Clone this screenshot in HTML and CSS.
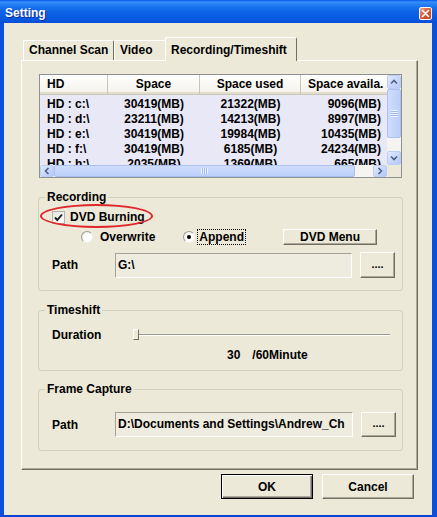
FILE: index.html
```html
<!DOCTYPE html>
<html lang="en">
<head>
<meta charset="utf-8">
<title>Setting</title>
<link rel="stylesheet" href="styles.css">
</head>
<body>
<div class="window">
  <div class="titlebar">
    <span class="title">Setting</span>
    <span class="close" aria-label="Close">
      <svg width="9" height="9" viewBox="0 0 9 9"><path d="M1.5 1.5 L7.5 7.5 M7.5 1.5 L1.5 7.5" stroke="#fff" stroke-width="1.7" stroke-linecap="round"/></svg>
    </span>
  </div>

  <div class="client">
    <div class="tabs">
      <div class="tab tab-scan">Channel Scan</div>
      <div class="tab tab-video">Video</div>
      <div class="tab tab-rec">Recording/Timeshift</div>
    </div>

    <div class="panel">
      <div class="list">
        <div class="viewport">
          <div class="lrow lhead">
            <span class="c1">HD</span>
            <span class="c2">Space</span>
            <span class="c3">Space used</span>
            <span class="c4">Space availa.</span>
          </div>
          <div class="lrow"><span class="c1">HD : c:\</span><span class="c2">30419(MB)</span><span class="c3">21322(MB)</span><span class="c4">9096(MB)</span></div>
          <div class="lrow"><span class="c1">HD : d:\</span><span class="c2">23211(MB)</span><span class="c3">14213(MB)</span><span class="c4">8997(MB)</span></div>
          <div class="lrow"><span class="c1">HD : e:\</span><span class="c2">30419(MB)</span><span class="c3">19984(MB)</span><span class="c4">10435(MB)</span></div>
          <div class="lrow"><span class="c1">HD : f:\</span><span class="c2">30419(MB)</span><span class="c3">6185(MB)</span><span class="c4">24234(MB)</span></div>
          <div class="lrow"><span class="c1">HD : h:\</span><span class="c2">2035(MB)</span><span class="c3">1369(MB)</span><span class="c4">665(MB)</span></div>
        </div>

        <div class="vscroll">
          <span class="sbtn">
            <svg width="8" height="6" viewBox="0 0 8 6"><path d="M1 4.5 L4 1.5 L7 4.5" fill="none" stroke="#4D6185" stroke-width="1.6"/></svg>
          </span>
          <span class="vthumb"><span class="grip-h"></span></span>
          <span class="strack"></span>
          <span class="sbtn">
            <svg width="8" height="6" viewBox="0 0 8 6"><path d="M1 1.5 L4 4.5 L7 1.5" fill="none" stroke="#4D6185" stroke-width="1.6"/></svg>
          </span>
        </div>

        <div class="hscroll">
          <span class="sbtn">
            <svg width="6" height="8" viewBox="0 0 6 8"><path d="M4.5 1 L1.5 4 L4.5 7" fill="none" stroke="#4D6185" stroke-width="1.6"/></svg>
          </span>
          <span class="hthumb"><span class="grip-v"></span></span>
          <span class="strack"></span>
          <span class="sbtn">
            <svg width="6" height="8" viewBox="0 0 6 8"><path d="M1.5 1 L4.5 4 L1.5 7" fill="none" stroke="#4D6185" stroke-width="1.6"/></svg>
          </span>
        </div>
        <div class="corner"></div>
      </div>

      <fieldset class="group group-rec">
        <legend>Recording</legend>
        <div class="gbody">
          <div class="row-check">
            <span class="checkbox">
              <svg width="11" height="11" viewBox="0 0 11 11"><path d="M2 5.5 L4.3 8 L9 2.5" fill="none" stroke="#1c1c1c" stroke-width="1.9"/></svg>
            </span>
            <span class="check-label">DVD Burning</span>
            <span class="mark-ring"></span>
          </div>
          <div class="row-radio">
            <span class="radio r-first"></span>
            <span class="radio-label">Overwrite</span>
            <span class="radio r-second checked"></span>
            <span class="focus">Append</span>
            <button class="btn btn-dvd" type="button">DVD Menu</button>
          </div>
          <div class="row-path">
            <span class="plabel">Path</span>
            <span class="input">G:\</span>
            <button class="btn browse" type="button">....</button>
          </div>
        </div>
      </fieldset>

      <fieldset class="group group-time">
        <legend>Timeshift</legend>
        <div class="gbody">
          <div class="row-dur">
            <span class="dlabel">Duration</span>
            <div class="slider">
              <span class="track"></span>
              <span class="thumb"></span>
            </div>
          </div>
          <div class="row-val">
            <span class="v-num">30</span>
            <span class="v-unit">/60Minute</span>
          </div>
        </div>
      </fieldset>

      <fieldset class="group group-frame">
        <legend>Frame Capture</legend>
        <div class="gbody">
          <div class="row-path">
            <span class="plabel">Path</span>
            <span class="input input-wide">D:\Documents and Settings\Andrew_Ch</span>
            <button class="btn browse" type="button">....</button>
          </div>
        </div>
      </fieldset>
    </div>

    <div class="actions">
      <button class="btn btn-action btn-default" type="button">OK</button>
      <button class="btn btn-action" type="button">Cancel</button>
    </div>
  </div>
</div>
</body>
</html>
```

FILE: styles.css
```css
* {
  box-sizing: border-box;
}

html,
body {
  margin: 0;
  padding: 0;
}

body {
  width: 437px;
  height: 517px;
  overflow: hidden;
  font: bold 12px "Liberation Sans", Arial, sans-serif;
  color: #000;
  background: #ECE9D8;
}

/* ---------- window frame ---------- */
.window {
  display: flex;
  flex-direction: column;
  width: 437px;
  height: 517px;
}

.titlebar {
  flex: 0 0 23px;
  display: flex;
  align-items: center;
  justify-content: space-between;
  padding: 3px 5px 0 5px;
  background: linear-gradient(to bottom,
    #0058EE 0px, #3A8EF8 2px, #2A84F6 4px, #1873EE 7px,
    #0E66E8 11px, #0A5DE4 16px, #0757DF 20px, #0A4CD6 23px);
}

.title {
  color: #fff;
  font-size: 12px;
  text-shadow: 1px 1px 0 #0A2A9A;
}

.close {
  width: 13px;
  height: 13px;
  display: flex;
  align-items: center;
  justify-content: center;
  border: 1px solid #fff;
  border-radius: 2px;
  background: linear-gradient(135deg, #EBA58E 0%, #DC5A35 45%, #C8421C 100%);
}

.client {
  flex: 1;
  display: flex;
  flex-direction: column;
  background: #ECE9D8;
  border-left: 4px solid #0A50DC;
  border-right: 5px solid #0A50DC;
  border-bottom: 2px solid #0845D2;
  padding: 14px 14px 0 17px;
}

/* ---------- tabs ---------- */
.tabs {
  display: flex;
  align-items: flex-end;
  height: 23px;
  padding-left: 2px;
}

.tab {
  height: 20px;
  line-height: 18px;
  padding-left: 5px;
  border-top: 1px solid #fff;
  border-left: 1px solid #fff;
  border-right: 1px solid #716F64;
  border-radius: 2px 2px 0 0;
  background: #ECE9D8;
  white-space: nowrap;
}

.tab-scan {
  width: 91px;
}

.tab-video {
  width: 53px;
}

.tab-rec {
  width: 132px;
  height: 24px;
  margin-left: -2px;
  margin-bottom: -1px;
  padding-top: 3px;
  position: relative;
  z-index: 1;
}

.panel {
  border: 1px solid;
  border-color: #fff #716F64 #716F64 #fff;
  box-shadow: inset -1px -1px 0 #ACA899;
  padding: 13px 14px 18px 16px;
}

/* ---------- drive list ---------- */
.list {
  margin: 0 1px;
  height: 104px;
  border: 1px solid #8E9092;
  display: grid;
  grid-template-columns: 1fr 14px;
  grid-template-rows: 1fr 12px;
  background: #E8E8F6;
}

.viewport {
  overflow: hidden;
  grid-column: 1;
  grid-row: 1;
}

.lrow {
  display: flex;
  height: 15px;
  line-height: 15px;
  white-space: nowrap;
}

.lrow span {
  flex-shrink: 0;
}

.lhead {
  height: 20px;
  line-height: 19px;
  margin-bottom: 2px;
  background: linear-gradient(to bottom, #FFFFFF, #F2F1EA);
  border-bottom: 1px solid #CBC7B8;
  box-shadow: inset 0 -2px 0 #E2DECD;
}

.lhead span {
  border-right: 1px solid #C9C6B6;
}

.lhead .c4 {
  border-right: 0;
}

.c1 {
  width: 68px;
  padding-left: 7px;
}

.c2 {
  width: 92px;
  text-align: center;
}

.c3 {
  width: 101px;
  text-align: center;
}

.c4 {
  width: 100px;
  text-align: right;
  padding-right: 20px;
}

.lhead .c4 {
  text-align: left;
  padding: 0 0 0 7px;
}

/* scrollbars */
.vscroll {
  grid-column: 2;
  grid-row: 1;
  display: flex;
  flex-direction: column;
  background: #F5F4F0;
}

.hscroll {
  grid-column: 1;
  grid-row: 2;
  display: flex;
  background: #F5F4F0;
}

.corner {
  grid-column: 2;
  grid-row: 2;
  background: #ECE9D8;
}

.sbtn {
  flex: 0 0 14px;
  display: flex;
  align-items: center;
  justify-content: center;
  border: 1px solid #BCCDF5;
  border-radius: 2px;
  background: linear-gradient(135deg, #E2EBFE 0%, #C6D6FC 55%, #B4C8F7 100%);
}

.strack {
  flex: 1;
}

.vthumb,
.hthumb {
  display: flex;
  align-items: center;
  justify-content: center;
  border: 1px solid #ABC1F2;
  border-radius: 2px;
}

.vthumb {
  flex: 0 0 49px;
  background: linear-gradient(to right, #CFDCFD, #BCCFFA);
}

.hthumb {
  flex: 0 0 301px;
  background: linear-gradient(to bottom, #CFDCFD, #BCCFFA);
}

.grip-h {
  width: 7px;
  height: 7px;
  background: repeating-linear-gradient(to bottom, #EEF3FE 0 1px, #9DB8F5 1px 2px);
}

.grip-v {
  width: 7px;
  height: 6px;
  background: repeating-linear-gradient(to right, #EEF3FE 0 1px, #9DB8F5 1px 2px);
}

/* ---------- group boxes ---------- */
.group {
  margin: 12px 0 0;
  padding: 0;
  min-width: 0;
  border: 1px solid #D0D0BF;
  border-radius: 3px;
}

.group legend {
  margin-left: 6px;
  padding: 0 2px;
  line-height: 14px;
}

.group-frame {
  margin-top: 11px;
}

.gbody {
  padding-left: 13px;
}

.group-rec .gbody {
  padding-top: 6px;
  padding-bottom: 12px;
}

.group-time .gbody {
  padding-top: 11px;
  padding-bottom: 8px;
}

.group-frame .gbody {
  padding-top: 16px;
  padding-bottom: 13px;
}

/* checkbox row */
.row-check {
  position: relative;
  display: flex;
  align-items: center;
  height: 14px;
}

.checkbox {
  width: 13px;
  height: 13px;
  display: flex;
  align-items: center;
  justify-content: center;
  border: 1px solid #B5B4AC;
  background: linear-gradient(135deg, #E6E5DE, #FFFFFF);
}

.check-label {
  margin-left: 5px;
}

.mark-ring {
  position: absolute;
  left: -12px;
  top: -6px;
  width: 113px;
  height: 24px;
  border: 2px solid #E0262C;
  border-radius: 50%;
}

/* radio row */
.row-radio {
  display: flex;
  align-items: center;
  height: 16px;
  margin-top: 5px;
}

.radio {
  width: 12px;
  height: 12px;
  flex-shrink: 0;
  display: flex;
  align-items: center;
  justify-content: center;
  border-radius: 50%;
  border: 1px solid;
  border-color: #9F9D92 #F4F3EE #F4F3EE #9F9D92;
  background: radial-gradient(circle at 60% 60%, #FFFFFF 40%, #E4E2D8 100%);
}

.radio.checked::after {
  content: "";
  width: 4px;
  height: 4px;
  border-radius: 50%;
  background: #000;
}

.r-first {
  margin-left: 29px;
}

.radio-label {
  margin-left: 7px;
}

.r-second {
  margin-left: 28px;
}

.focus {
  margin-left: 2px;
  padding: 0 1px;
  line-height: 14px;
  border: 1px dotted #000;
}

/* buttons */
.btn {
  appearance: none;
  margin: 0;
  padding: 0;
  font: inherit;
  color: #000;
  display: flex;
  align-items: center;
  justify-content: center;
  background: #ECE9D8;
  border: 1px solid;
  border-color: #FFFFFF #716F64 #716F64 #FFFFFF;
  box-shadow: inset -1px -1px 0 #ACA899;
}

.btn-dvd {
  margin-left: 37px;
  width: 94px;
  height: 16px;
}

/* path rows */
.row-path {
  display: flex;
  align-items: center;
  height: 26px;
  margin-top: 7px;
}

.group-frame .row-path {
  margin-top: 0;
  height: 25px;
}

.plabel {
  width: 63px;
  flex-shrink: 0;
}

.input {
  width: 237px;
  height: 25px;
  line-height: 23px;
  padding-left: 2px;
  overflow: hidden;
  white-space: nowrap;
  background: #EEEBDF;
  border: 1px solid;
  border-color: #A5A397 #FFFFFF #FFFFFF #A5A397;
}

.input-wide {
  width: 238px;
}

.browse {
  margin-left: 8px;
  width: 35px;
  height: 26px;
  font-size: 11px;
  padding-bottom: 3px;
}

.group-frame .browse {
  height: 25px;
}

/* duration slider */
.row-dur {
  display: flex;
  align-items: center;
  height: 14px;
}

.dlabel {
  width: 81px;
  flex-shrink: 0;
}

.slider {
  position: relative;
  width: 257px;
  height: 14px;
  display: flex;
  align-items: center;
}

.track {
  flex: 1;
  height: 2px;
  border-top: 1px solid #9C9A8D;
  border-bottom: 1px solid #FFFFFF;
}

.thumb {
  position: absolute;
  left: 0;
  top: 1px;
  width: 6px;
  height: 11px;
  background: #ECE9D8;
  border: 1px solid;
  border-color: #FFFFFF #716F64 #716F64 #FFFFFF;
}

.row-val {
  display: flex;
  height: 14px;
  line-height: 14px;
  margin-top: 6px;
}

.v-num {
  margin-left: 175px;
}

.v-unit {
  margin-left: 12px;
}

/* dialog buttons */
.actions {
  display: flex;
  justify-content: flex-end;
  gap: 9px;
  margin-top: 4px;
  padding-right: 4px;
}

.btn-action {
  width: 92px;
  height: 25px;
}

.btn-default {
  border: 1px solid #000;
  box-shadow: inset 1px 1px 0 #FFFFFF, inset -1px -1px 0 #716F64, inset -2px -2px 0 #ACA899;
}
```
